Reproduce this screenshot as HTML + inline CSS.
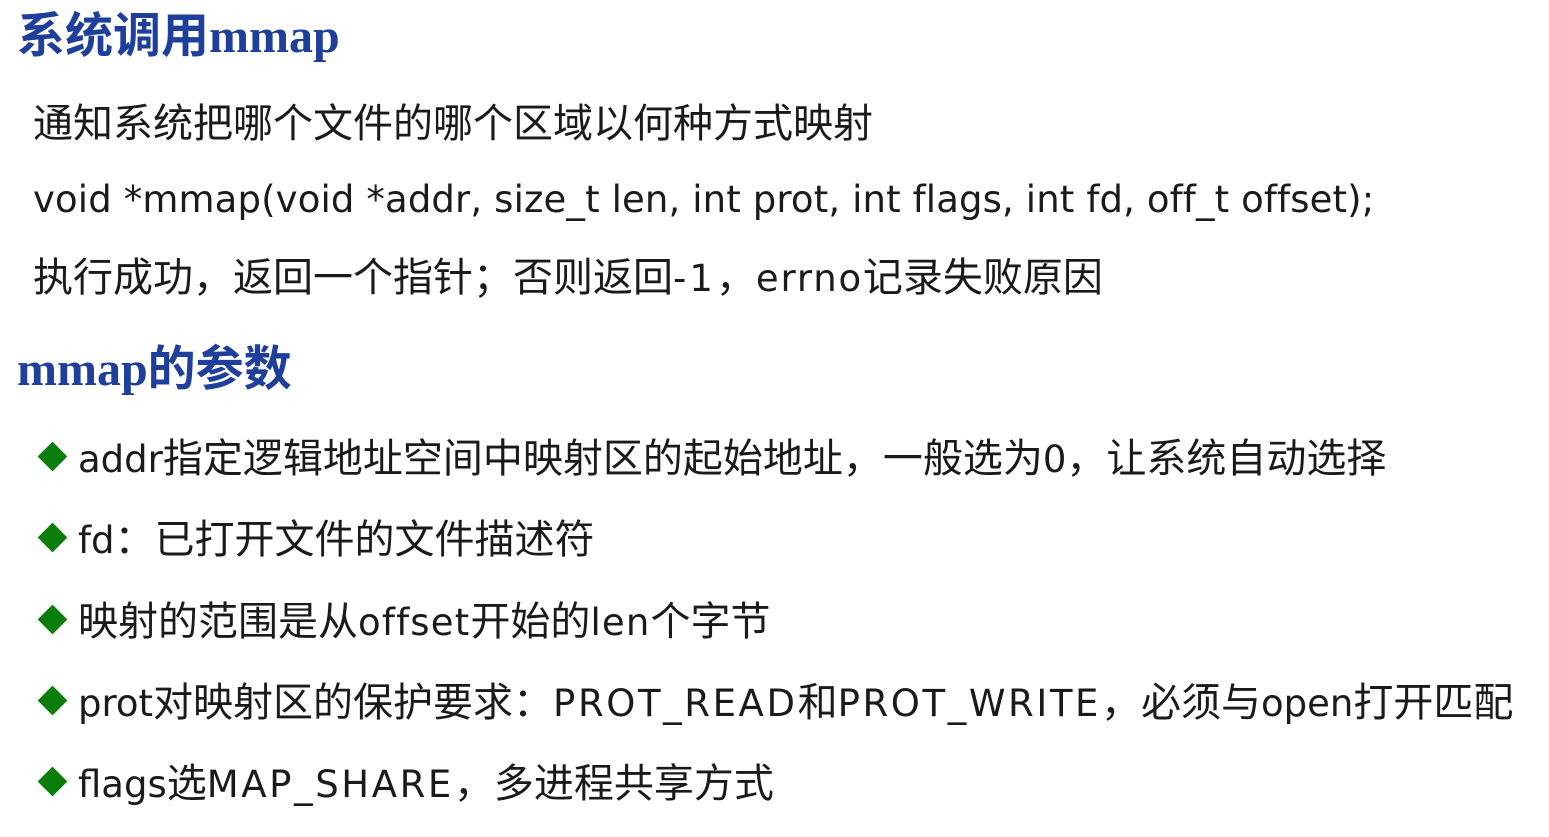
<!DOCTYPE html>
<html><head><meta charset="utf-8"><style>
body{margin:0;width:1549px;height:837px;background:#fff;position:relative;overflow:hidden;font-family:"DejaVu Sans","Noto Sans CJK SC",sans-serif;color:#1a1a1a}
.l{position:absolute;white-space:nowrap;line-height:1}
.h{color:#1f3f9c;font-weight:bold;font-family:"Liberation Serif","Noto Sans CJK SC",serif;font-size:48px}
.t{font-size:40px}
.e{font-size:37px}
.c{font-size:37px;letter-spacing:2.6px}
.d{position:absolute;width:21px;height:21px;background:#0b7d0b;transform:rotate(45deg)}
</style></head><body>
<div class="l h" style="left:17px;top:13px">系统调用mmap</div>
<div class="l t" style="left:33px;top:104px">通知系统把哪个文件的哪个区域以何种方式映射</div>
<div class="l t" style="left:33px;top:179px"><span class="e" style="letter-spacing:0.13px">void *mmap(void *addr, size_t len, int prot, int flags, int fd, off_t offset);</span></div>
<div class="l t" style="left:33px;top:258px">执行成功，返回一个指针；否则返回<span class="e" style="letter-spacing:3px">-1</span>，<span class="e" style="letter-spacing:1.8px">errno</span>记录失败原因</div>
<div class="l h" style="left:17px;top:346px">mmap的参数</div>
<div class="d" style="left:42px;top:446px"></div>
<div class="l t" style="left:78px;top:439px"><span class="e">addr</span>指定逻辑地址空间中映射区的起始地址，一般选为<span class="e">0</span>，让系统自动选择</div>
<div class="d" style="left:42px;top:527px"></div>
<div class="l t" style="left:78px;top:520px"><span class="e">fd</span>：已打开文件的文件描述符</div>
<div class="d" style="left:42px;top:609px"></div>
<div class="l t" style="left:78px;top:602px">映射的范围是从<span class="e" style="letter-spacing:1.2px">offset</span>开始的<span class="e" style="letter-spacing:1.2px">len</span>个字节</div>
<div class="d" style="left:42px;top:690px"></div>
<div class="l t" style="left:78px;top:683px"><span class="e">prot</span>对映射区的保护要求：<span class="c">PROT_READ</span>和<span class="c">PROT_WRITE</span>，必须与<span class="e">open</span>打开匹配</div>
<div class="d" style="left:42px;top:771px"></div>
<div class="l t" style="left:78px;top:764px"><span class="e">flags</span>选<span class="c">MAP_SHARE</span>，多进程共享方式</div>
</body></html>
